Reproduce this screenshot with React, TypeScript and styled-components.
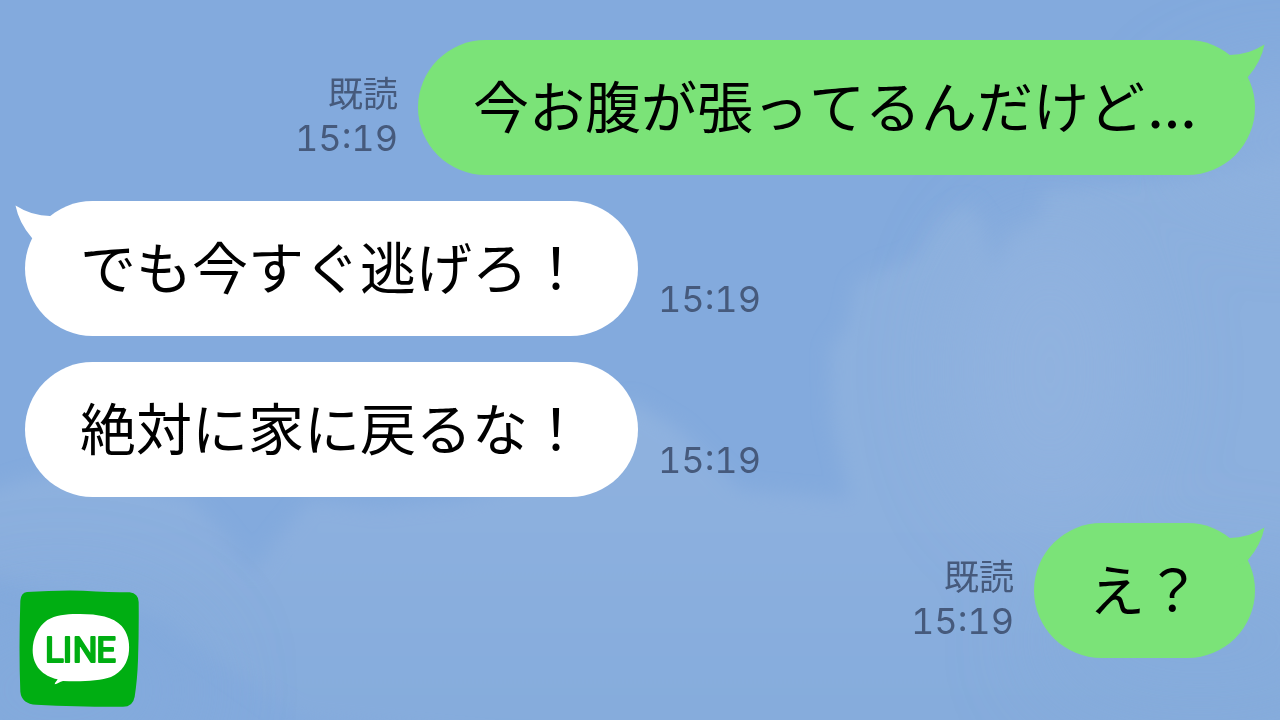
import React from "react";
import styled, { createGlobalStyle } from "styled-components";

const GlobalStyle = createGlobalStyle`
  * { box-sizing: border-box; }
  body {
    margin: 0;
    background: #84abde;
    font-family: "Noto Sans CJK JP", sans-serif;
  }
`;

const Page = styled.main`
  position: relative;
  min-height: 100vh;
  overflow: hidden;
`;

const Sky = styled.svg`
  position: absolute;
  inset: 0;
  width: 100%;
  height: 100%;
`;

const Thread = styled.ol`
  position: relative;
  display: flex;
  flex-direction: column;
  gap: 26px;
  margin: 0;
  padding: 40px 25px;
  list-style: none;
`;

const Row = styled.li<{ $mine: boolean }>`
  display: flex;
  flex-direction: ${(p) => (p.$mine ? "row-reverse" : "row")};
  align-items: flex-end;
  gap: 20px;
`;

const Bubble = styled.div<{ $mine: boolean }>`
  position: relative;
  padding: 24px 54px 31px 55px;
  border-radius: 68px;
  background: ${(p) => (p.$mine ? "#7be378" : "#ffffff")};
`;

const Message = styled.p`
  margin: 0;
  color: #000;
  font-size: 56px;
  font-kerning: none;
  line-height: 80px;
  white-space: nowrap;
`;

const Ellipsis = styled.span`
  display: inline-block;
  width: 56px;
  padding-left: 3px;
  font-family: "Lato", sans-serif;
  font-size: 64px;
  line-height: 56px;
`;

const Tail = styled.svg<{ $mine: boolean }>`
  position: absolute;
  top: 0;
  ${(p) => (p.$mine ? "right: -10px;" : "left: -10px; transform: scaleX(-1);")}
  width: 60px;
  height: 46px;
  fill: ${(p) => (p.$mine ? "#7be378" : "#ffffff")};
`;

const Meta = styled.div<{ $mine: boolean }>`
  display: flex;
  flex-direction: column;
  align-items: ${(p) => (p.$mine ? "flex-end" : "flex-start")};
  padding-bottom: 15px;
  color: #465a7c;
`;

const ReadMark = styled.span`
  font-size: 35px;
  line-height: 48px;
`;

const Time = styled.time`
  font-family: "Inter", sans-serif;
  font-size: 36px;
  line-height: 44px;
  font-variant-numeric: tabular-nums;
`;

const Logo = styled.svg`
  position: absolute;
  left: 19px;
  bottom: 12px;
  width: 121px;
  height: 118px;
`;

const LogoText = styled.text`
  font-family: "Roboto", sans-serif;
  font-size: 104px;
  fill: #00ae12;
  stroke: #00ae12;
  stroke-width: 6px;
  stroke-linejoin: round;
`;

type Entry = { text: string; trailing?: boolean; mine: boolean; tail: boolean; time: string };

const entries: Entry[] = [
  { text: "今お腹が張ってるんだけど", trailing: true, mine: true, tail: true, time: "15:19" },
  { text: "でも今すぐ逃げろ！", mine: false, tail: true, time: "15:19" },
  { text: "絶対に家に戻るな！", mine: false, tail: false, time: "15:19" },
  { text: "え？", mine: true, tail: true, time: "15:19" },
];

function Clouds() {
  return (
    <Sky viewBox="0 0 1280 720" preserveAspectRatio="xMidYMid slice" aria-hidden="true">
      <defs>
        <filter id="soft" x="-20%" y="-20%" width="140%" height="140%">
          <feGaussianBlur stdDeviation="9" />
        </filter>
        <filter id="wide" x="-50%" y="-50%" width="200%" height="200%">
          <feGaussianBlur stdDeviation="45" />
        </filter>
        <linearGradient id="fade" x1="0" y1="0" x2="0" y2="1">
          <stop offset="0" stopColor="#8fb2df" />
          <stop offset="0.4" stopColor="#8bafde" />
          <stop offset="1" stopColor="#84abdc" />
        </linearGradient>
      </defs>
      <rect width="1280" height="720" fill="#83aadd" />
      <g filter="url(#soft)">
        <path
          fill="#8cb0de"
          d="M1320 150L1180 178L1045 190L1040 220L1010 235L993 272L984 225L968 203L940 220L915 258L880 270L856 285L848 325L830 350L832 420L850 500L900 560L1320 600Z"
        />
        <path
          fill="url(#fade)"
          d="M-40 500L30 478L80 470L190 498L220 530L252 572L285 530L310 500L380 508L460 500L560 470L630 400L680 430L740 490L860 500L1000 480L1320 470L1320 760L700 760L300 720L160 620L-40 570Z"
        />
      </g>
      <g filter="url(#wide)">
        <ellipse cx="1050" cy="370" rx="90" ry="150" fill="#93b4e0" opacity="0.7" />
        <ellipse cx="1290" cy="140" rx="110" ry="60" fill="#8fb2df" opacity="0.8" />
        <ellipse cx="60" cy="690" rx="140" ry="90" fill="#83a9dc" opacity="0.7" />
        <ellipse cx="1200" cy="640" rx="160" ry="70" fill="#84abdc" opacity="0.7" />
      </g>
    </Sky>
  );
}

function LineLogo() {
  return (
    <Logo viewBox="58 60 363 354" role="img" aria-label="LINE">
      <path
        fill="#00ae12"
        d="M82 66Q170 60 250 62Q330 67 390 67Q416 70 417 96Q418 180 415 270Q413 330 405 380Q400 410 370 410Q250 411 110 404Q66 402 62 365Q57 240 62 92Q64 68 82 66Z"
      />
      <path
        fill="#fff"
        d="M232 132C290 131 340 139 366 168C384 189 390 215 388 242C386 277 366 306 334 321C300 333 240 336 190 333C180 335 174 342 165 343C166 337 171 333 174 328C130 318 99 289 99 240C99 205 115 170 143 150C167 136 198 132 232 132Z"
      />
      <LogoText x="136 189 219 290" y="275 275 275 277">
        LINE
      </LogoText>
    </Logo>
  );
}

export default function App() {
  return (
    <>
      <GlobalStyle />
      <Page>
        <Clouds />
        <Thread>
          {entries.map((e) => (
            <Row key={e.text} $mine={e.mine}>
              <Bubble $mine={e.mine}>
                {e.tail && (
                  <Tail $mine={e.mine} viewBox="0 0 60 46" aria-hidden="true">
                    <path d="M25 15Q43 15 59.500 4.500Q56 22 43 37L30 45L15 25Z" />
                  </Tail>
                )}
                <Message>
                  {e.text}
                  {e.trailing && <Ellipsis>…</Ellipsis>}
                </Message>
              </Bubble>
              <Meta $mine={e.mine}>
                {e.mine && <ReadMark>既読</ReadMark>}
                <Time>{e.time}</Time>
              </Meta>
            </Row>
          ))}
        </Thread>
        <LineLogo />
      </Page>
    </>
  );
}
